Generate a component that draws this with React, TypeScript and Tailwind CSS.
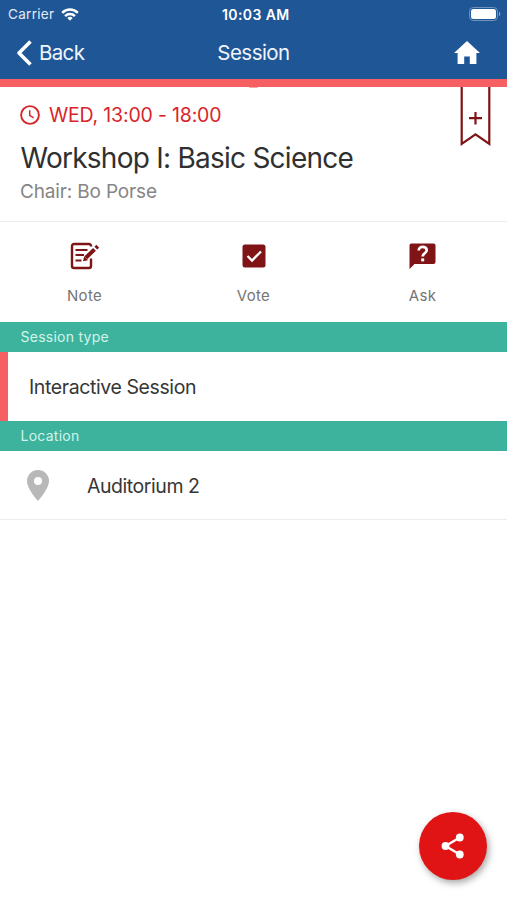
import React from 'react';

interface ActionProps {
  label: string;
  children: React.ReactNode;
}

const StatusBar: React.FC = () => (
  <div className="relative flex h-[27px] items-center justify-between pl-[8px] pr-[6px] pt-px text-[13.5px] leading-none text-[#e3ecf6]">
    <div className="flex items-center gap-[7px]">
      <span className="pt-px tracking-[0.3px]">Carrier</span>
      <svg width="18" height="13" viewBox="0 0 18 13" fill="none" stroke="#fff" strokeWidth="2.5">
        <path d="M1.2 4.8a11 11 0 0 1 15.6 0" />
        <path d="M4.1 8.1a7 7 0 0 1 9.8 0" />
        <path d="M9 12.8 6.3 10.1a3.9 3.9 0 0 1 5.4 0Z" fill="#fff" stroke="none" />
      </svg>
    </div>
    <span className="absolute left-[222px] pt-px text-[14px] font-semibold tracking-[0.4px] text-white">10:03 AM</span>
    <svg width="32" height="14" viewBox="0 0 32 14" className="-mt-px">
      <rect x="0.5" y="0.5" width="28" height="13" rx="3.8" fill="none" stroke="#6f93bd" />
      <rect x="2" y="2" width="25" height="10" rx="2.5" fill="#fff" />
      <path d="M30 4.8c1.6.6 1.6 3.8 0 4.4Z" fill="#8eaacb" />
    </svg>
  </div>
);

const NavBar: React.FC = () => (
  <nav className="grid h-[52px] grid-cols-3 items-center text-[20.5px] leading-none text-[#f0f5fb]">
    <button className="flex items-center gap-[7px] pl-[16px]">
      <svg width="16" height="26" viewBox="0 0 16 26" fill="none" stroke="#fff" strokeWidth="3.6" strokeLinejoin="round">
        <path d="M14.5 1.5 3 13l11.5 11.5" />
      </svg>
      <span className="tracking-[-0.65px]">Back</span>
    </button>
    <h1 className="text-center tracking-[-0.55px]">Session</h1>
    <button className="justify-self-end pr-[27px]" aria-label="Home">
      <svg width="26" height="23" viewBox="0 0 26 23" fill="#fff" className="-mt-px">
        <path d="M13 0 0 12h3.6v11h6.6v-7.5h5.6V23h6.6V12H26Z" />
      </svg>
    </button>
  </nav>
);

const Action: React.FC<ActionProps> = ({ label, children }) => (
  <button className="flex w-[169px] flex-col items-center">
    <span className="flex h-[28px] items-center justify-center">{children}</span>
    <span className="mt-[16px] text-[15px] leading-[20px] tracking-[0.3px] text-[#757575]">{label}</span>
  </button>
);

const SectionTitle: React.FC<{ title: string }> = ({ title }) => (
  <h3 className="flex h-[30px] items-center bg-[#3db39e] pl-[20.5px] text-[14px] leading-none tracking-[0.25px] text-[#d3f3eb]">
    {title}
  </h3>
);

const App: React.FC = () => {
  return (
    <div className="relative h-[900px] w-[507px] overflow-hidden bg-white font-[Inter,'Liberation_Sans',sans-serif]">
      <header className="border-b-8 border-[#f76063] bg-[#1f5696]">
        <StatusBar />
        <NavBar />
      </header>

      {/* Session summary */}
      <section className="relative h-[135px] border-b border-[#ececec] pt-[15px]">
        {/* edge of the pull handle under the header */}
        <span className="absolute left-[249px] top-0 h-px w-[9px] rounded-b-full bg-[#f9a5a6]" />
        <div className="flex items-center pl-[20px]">
          <svg width="20" height="20" viewBox="0 0 20 20" fill="none" stroke="#d9252a" strokeWidth="1.9">
            <circle cx="10" cy="10" r="8.9" />
            <path d="M9.7 5.2v5.2l3.9 2.4" strokeWidth="1.5" />
          </svg>
          <span className="ml-[9px] text-[19.5px] leading-[26px] tracking-[-0.18px] text-[#d9252a]">WED, 13:00 - 18:00</span>
        </div>
        <h2 className="mt-[12px] pl-[20.5px] text-[28px] leading-[36px] tracking-[-0.75px] text-[#303030]">
          Workshop I: Basic Science
        </h2>
        <p className="mt-[4px] pl-[20px] text-[19px] leading-[24px] tracking-[-0.16px] text-[#858585]">Chair: Bo Porse</p>

        <button className="absolute right-[16px] top-0" aria-label="Add bookmark">
          <svg width="31" height="60" viewBox="0 0 31 60" fill="none" stroke="#7f1416" strokeWidth="2.2">
            <path d="M1.7 0v57l13.8-9.7L29.3 57V0" />
            <path d="M9 31.2h13M15.5 25v12.5" />
          </svg>
        </button>
      </section>

      {/* Actions */}
      <section className="flex h-[100px] pt-[20px]">
        <Action label="Note">
          <svg width="30" height="28" viewBox="0 0 30 28" fill="none" stroke="#7f1416" strokeWidth="2.4">
            <path d="M21 4.6V4a2 2 0 0 0-2-2H4a2 2 0 0 0-2 2v20a2 2 0 0 0 2 2h15a2 2 0 0 0 2-2v-7.5" />
            <path d="M5.5 8h12M5.500 13h8.500M5.500 18.500h6" strokeWidth="2.1" />
            <path d="m15.8 15.8 8.700-8.400" strokeWidth="4" />
            <path d="m13 19.3 1.2-5 3.8 3.9Z" fill="#7f1416" stroke="none" />
            <path d="m25.8 6.1 2-1.9" strokeWidth="4" />
          </svg>
        </Action>
        <Action label="Vote">
          <svg width="24" height="24" viewBox="0 0 24 24">
            <rect x="0.5" y="0.5" width="23" height="23" rx="2.5" fill="#7f1416" />
            <path d="m5.5 12 4.5 4.5 9-9" fill="none" stroke="#fff" strokeWidth="2.3" />
          </svg>
        </Action>
        <Action label="Ask">
          <svg width="27" height="26" viewBox="0 0 27 26" className="-mt-px">
            <path d="M2.5.5h22a2 2 0 0 1 2 2V19a2 2 0 0 1-2 2h-19l-5 5V2.5a2 2 0 0 1 2-2Z" fill="#7f1416" />
            <path d="M9.7 7.5c0-5 8-4.700 8-.3 0 3-4 3.200-4 6.300" fill="none" stroke="#fff" strokeWidth="2.7" />
            <rect x="12.2" y="15.4" width="3" height="3" fill="#fff" />
          </svg>
        </Action>
      </section>

      <SectionTitle title="Session type" />
      <div className="flex h-[69px] items-center border-l-8 border-[#f76063] pl-[21px] pt-[3px] text-[19.5px] leading-none tracking-[-0.4px] text-[#363636]">
        Interactive Session
      </div>

      <SectionTitle title="Location" />
      <div className="flex h-[69px] items-center border-b border-[#ececec] pl-[27px] pt-px text-[19.5px] leading-none tracking-[-0.45px] text-[#363636]">
        <svg width="22" height="31" viewBox="0 0 22 31" fill="#b8b8b8">
          <path fillRule="evenodd" d="M11 0a11 11 0 0 0-11 11c0 8 11 20 11 20s11-12 11-20A11 11 0 0 0 11 0Zm0 7a4 4 0 1 1 0 8 4 4 0 0 1 0-8Z" />
        </svg>
        <span className="ml-[38px] pt-[2px]">Auditorium 2</span>
      </div>

      {/* Floating share button */}
      <button
        className="absolute bottom-[20px] right-[20px] flex size-[68px] items-center justify-center rounded-full bg-[#e01414] shadow-[2px_3px_7px_rgba(0,0,0,0.35)]"
        aria-label="Share"
      >
        <svg width="24" height="26" viewBox="0 0 24 26" fill="#fff">
          <path d="M18.8 4.5 4.5 13l14.3 8.5" fill="none" stroke="#fff" strokeWidth="2.4" />
          <circle cx="4.5" cy="13" r="3.9" />
          <circle cx="18.8" cy="4.5" r="3.9" />
          <circle cx="18.8" cy="21.5" r="3.9" />
        </svg>
      </button>
    </div>
  );
};

export default App;
